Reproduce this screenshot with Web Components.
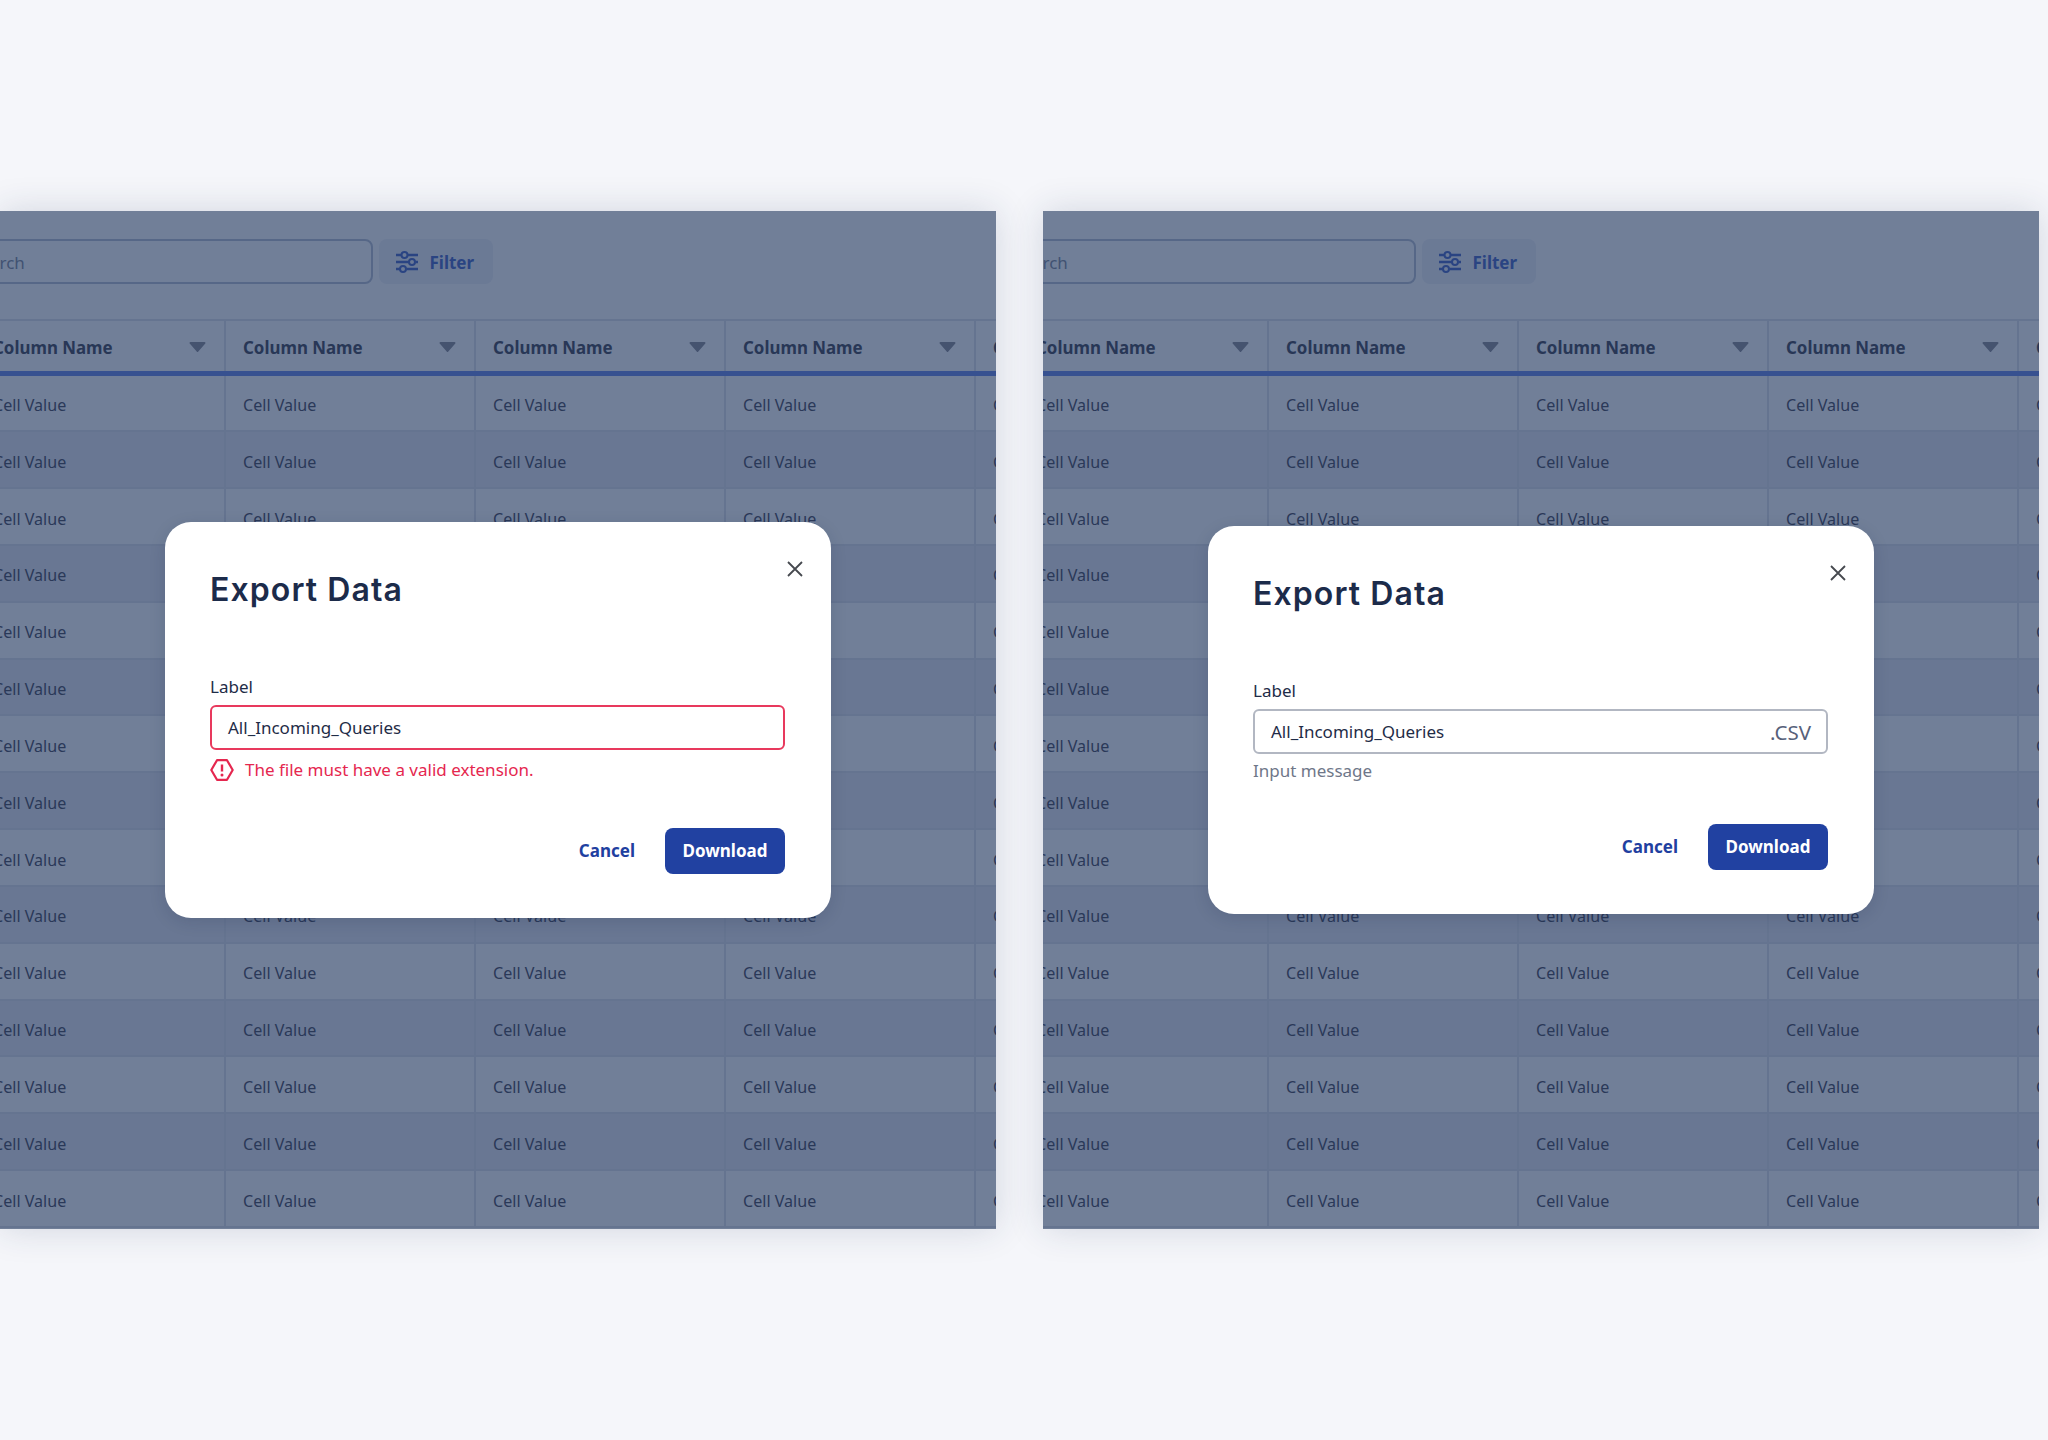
<!DOCTYPE html>
<html lang="en"><head><meta charset="utf-8"><title>Export Data</title>
<style>
html,body{margin:0;padding:0;background:#f5f6fa;}
body{width:2048px;height:1440px;overflow:hidden;font-family:"Noto Sans",sans-serif;}
.page{display:flex;gap:47px;padding-top:211px;}
</style></head><body>
<div class="page">
<export-panel variant="error"></export-panel>
<export-panel variant="normal"></export-panel>
</div>
<script>
customElements.define('data-table',class extends HTMLElement{
 connectedCallback(){
  const s=this.attachShadow({mode:'open'});
  const cols=[0,1,2,3,4];
  const caret='<svg width="17" height="10" viewBox="0 0 17 10"><path d="M1.5 0h14a1 1 0 0 1 .8 1.6L9.3 9.4a1 1 0 0 1-1.6 0L.7 1.6A1 1 0 0 1 1.5 0z" fill="#87878f"/></svg>';
  let h='<div class="row head">'+cols.map(()=>`<div class="c"><span>Column Name</span>${caret}</div>`).join('')+'</div>';
  for(let r=0;r<15;r++)h+=`<div class="row ${r%2?'alt':''}">`+cols.map(()=>'<div class="c"><span>Cell Value</span></div>').join('')+'</div>';
  s.innerHTML=`<style>
  :host{display:block;margin-left:-24px;width:1250px;font:16.1px/22px "Noto Sans",sans-serif;color:#3f4152;}
  .row{display:grid;grid-template-columns:repeat(5,250px);height:56.83px;box-sizing:border-box;border-bottom:2px solid #dde0ea;}
  .row.alt{background:#e8eaf0;}
  .head{height:56.5px;border-top:2px solid #dde0ea;border-bottom:5px solid #6383e8;background:#fff;}
  .c{box-sizing:border-box;padding:4px 18.5px 0 17px;display:flex;align-items:center;justify-content:space-between;border-right:2px solid #dde0ea;}
  .head .c{font-size:16.9px;font-weight:700;color:#3a3c4e;padding-top:4px;padding-right:18.5px;}
  .head svg{margin-top:-1px;}
  </style>${h}`;
 }
});
customElements.define('table-toolbar',class extends HTMLElement{
 connectedCallback(){
  this.attachShadow({mode:'open'}).innerHTML=`<style>
  :host{display:flex;gap:6px;margin-left:-51px;padding:28px 0 35px;height:45px;font:17px/22px "Noto Sans",sans-serif;}
  .search{box-sizing:border-box;width:423.5px;height:45px;border:2px solid #b6bfd0;border-radius:8px;display:flex;align-items:center;padding:2px 0 0 20px;color:#7d8699;background:#fff;}
  .filter{box-sizing:border-box;width:114.5px;height:45px;border-radius:8px;background:#eef0f7;display:flex;align-items:center;gap:11px;padding-left:16px;color:#3f5fc4;font-weight:700;}
  .filter span{padding-top:2px;}
  </style><div class="search">Search</div><div class="filter"><svg width="24" height="22" viewBox="0 0 24 22" fill="none" stroke="#3f5fc4" stroke-width="2.6"><path d="M1 4h5.500M13 4h10M1 11h13M20.500 11H23M1 18h4M11.500 18H23"/><g stroke-width="2"><circle cx="9.500" cy="4" r="3"/><circle cx="17" cy="11" r="3"/><circle cx="8" cy="18" r="3"/></g></svg><span>Filter</span></div>`;
 }
});
customElements.define('text-field',class extends HTMLElement{
 connectedCallback(){
  const err=this.getAttribute('variant')==='error';
  const icon='<svg width="24" height="22" viewBox="0 0 24 22" fill="none"><path d="M7 1.200h10L22.700 11 17 20.800H7L1.300 11z" stroke="#e5274f" stroke-width="2.200" stroke-linejoin="round"/><path d="M12 5.500v7" stroke="#e5274f" stroke-width="2.400"/><circle cx="12" cy="16" r="1.500" fill="#e5274f"/></svg>';
  this.attachShadow({mode:'open'}).innerHTML=`<style>
  :host{display:block;font:17px/22px "Noto Sans",sans-serif;color:#1f2c47;}
  .label{margin-bottom:7px;}
  .input{box-sizing:border-box;height:45px;border:2px solid ${err?'#e8395d':'#b2b7c2'};border-radius:6px;display:flex;align-items:center;justify-content:space-between;padding:0 15px 0 16px;}
  .ext{font-size:20.500px;color:#57617a;}
  .msg{display:flex;align-items:center;gap:11px;margin-top:${err?9:6}px;margin-bottom:${err?47:42}px;color:${err?'#e5274f':'#6f7789'};}
  </style><div class="label">Label</div><div class="input"><span>All_Incoming_Queries</span>${err?'':'<span class="ext">.CSV</span>'}</div><div class="msg">${err?icon+'<span>The file must have a valid extension.</span>':'<span>Input message</span>'}</div>`;
 }
});
customElements.define('action-button',class extends HTMLElement{
 connectedCallback(){
  this.attachShadow({mode:'open'}).innerHTML=`<style>
  :host{display:inline-flex;box-sizing:border-box;height:45.500px;align-items:center;justify-content:center;padding-top:1px;border-radius:8px;font:700 17px/22px "Noto Sans",sans-serif;color:#1f40a0;}
  :host([primary]){background:#2141a1;color:#fff;width:120px;}
  :host(:not([primary])){margin-right:30px;}
  </style><slot></slot>`;
 }
});
customElements.define('export-dialog',class extends HTMLElement{
 connectedCallback(){
  const v=this.getAttribute('variant');
  this.attachShadow({mode:'open'}).innerHTML=`<style>
  :host{display:block;position:relative;box-sizing:border-box;width:666px;padding:45px 46px 44.500px 45px;background:#fff;border-radius:26px;box-shadow:0 4px 16px rgba(20,35,70,.15);}
  h2{margin:0 0 63px;font:600 32px/46px Inter,sans-serif;letter-spacing:1.1px;color:#1c2b4a;}
  .close{position:absolute;top:39px;right:28px;line-height:0;}
  .acts{display:flex;justify-content:flex-end;align-items:center;}
  </style><h2>Export Data</h2><div class="close"><svg width="16" height="16" viewBox="0 0 16 16" stroke="#46494f" stroke-width="1.800" fill="none"><path d="M1 1l14 14M15 1L1 15"/></svg></div>
  <text-field variant="${v}"></text-field><div class="acts"><action-button>Cancel</action-button><action-button primary>Download</action-button></div>`;
 }
});
customElements.define('export-panel',class extends HTMLElement{
 connectedCallback(){
  const v=this.getAttribute('variant');
  this.attachShadow({mode:'open'}).innerHTML=`<style>
  :host{display:block;position:relative;width:996px;height:1018px;background:#fff;box-shadow:0 0 34px rgba(30,50,90,.16);}
  .clip{overflow:hidden;height:100%;}
  .scrim{position:absolute;inset:0;background:rgba(30,52,92,.63);display:flex;align-items:center;justify-content:center;}
  </style><div class="clip"><table-toolbar></table-toolbar><data-table></data-table></div><div class="scrim"><export-dialog variant="${v}"></export-dialog></div>`;
 }
});
</script>
</body></html>
